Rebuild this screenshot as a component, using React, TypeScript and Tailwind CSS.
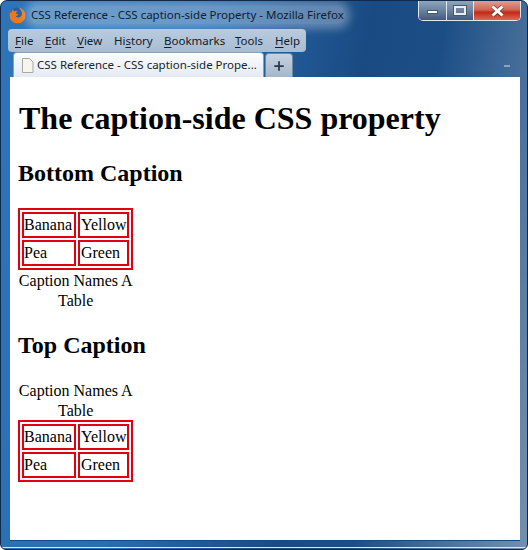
import { Plus } from "lucide-react";

const cell = "border-2 border-[#e00010] py-[2px] text-left font-normal leading-[18px]";

function PlantTable({ side }: { side: "top" | "bottom" }) {
  return (
    <table className="border-separate border-spacing-[2px] border-2 border-[#e00010]" style={{ captionSide: side }}>
      <caption className={side === "bottom" ? "pt-[1px] text-center leading-[19.5px]" : "text-center leading-[19.5px]"}>Caption Names A Table</caption>
      <tbody>
        <tr>
          <td className={`${cell} pl-0 pr-[2px]`}>Banana</td>
          <td className={`${cell} px-[1px]`}>Yellow</td>
        </tr>
        <tr>
          <td className={`${cell} pl-0 pr-[2px]`}>Pea</td>
          <td className={`${cell} px-[1px]`}>Green</td>
        </tr>
      </tbody>
    </table>
  );
}

function MenuItem({ first, rest, pre = "" }: { first: string; rest: string; pre?: string }) {
  return (
    <span>
      {pre}
      <span className="underline underline-offset-2">{first}</span>
      {rest}
    </span>
  );
}

export default function App() {
  return (
    <div className="relative flex h-[550px] w-[528px] flex-col overflow-hidden rounded-t-[7px] rounded-b-[6px] border border-[#10294a] bg-[linear-gradient(100deg,#2e74b8_0%,#2a6db0_32%,#1a4a82_60%,#1c4e86_72%,#7590ae_100%)] font-['Noto_Sans',sans-serif]">
      <div className="flex h-[28px] shrink-0 items-center pl-[8px] text-[11.5px] text-[#10202f]">
        <svg width="17" height="17" viewBox="0 0 17 17" className="mr-[4px] shrink-0">
          <circle cx="8.500" cy="8.500" r="8" fill="#2f5c9c" />
          <path d="M9 .6c4.500.3 7.500 3.700 7.500 7.900a8 8 0 0 1-16 0c0-1.500.3-2.800 1-3.900 0 .8.200 1.300.6 1.600C2.400 4.500 3.200 3 4.300 2.200c-.1 1 .2 1.700.7 2.100 1.500-.9 3-.9 4.500.2-1.500 0-2.700.6-2.600 1.600.1.800 2.100.5 2.200 1.500.1.900-1.200 1.400-2.300 1.300 1 1.900 4.300 2.200 5.800-.4 1.200-2.300-.4-5.900-3.600-7.900z" fill="#e87a1d" />
        </svg>
        <span className="rounded-[8px] bg-[#ffffff4d] px-[1px] shadow-[0_0_8px_5px_#ffffff4d]">CSS Reference - CSS caption-side Property - Mozilla Firefox</span>
      </div>
      <div className="absolute right-[6px] top-0 flex h-[20px] overflow-hidden rounded-b-[5px] border border-t-0 border-[#dfe8f1] text-white">
        <div className="flex w-[28px] items-center justify-center border-r border-[#dfe8f1] bg-[linear-gradient(#8fa5bd,#6a829e_50%,#3e5c7f)]">
          <span className="mt-[2px] h-[4px] w-[11px] border border-[#45586e] bg-white" />
        </div>
        <div className="flex w-[27px] items-center justify-center border-r border-[#dfe8f1] bg-[linear-gradient(#8fa5bd,#6a829e_50%,#3e5c7f)]">
          <span className="h-[9px] w-[12px] border-2 border-[#e8edf2] shadow-[0_0_0_1px_#45586e]" />
        </div>
        <div className="flex w-[46px] items-center justify-center bg-[linear-gradient(#dc9f94,#cb6a58_45%,#c52a18_60%,#d86a50)]">
          <svg width="15" height="12" viewBox="0 0 15 12">
            <path d="M2.500 1.500 12.500 10.500M12.500 1.500 2.500 10.500" stroke="#4a2018" strokeWidth="4.500" strokeOpacity=".5" />
            <path d="M2.500 1.500 12.500 10.500M12.500 1.500 2.500 10.500" stroke="#fff" strokeWidth="3" />
          </svg>
        </div>
      </div>
      <div className="ml-[7px] flex h-[23px] w-[298px] shrink-0 items-center rounded-[4px] bg-[linear-gradient(#b9cbdd,#a9bdd2)] pl-[7px] text-[11.5px] text-[#10202f]">
        <span className="w-[30px]"><MenuItem first="F" rest="ile" /></span>
        <span className="w-[32px]"><MenuItem first="E" rest="dit" /></span>
        <span className="w-[37px]"><MenuItem first="V" rest="iew" /></span>
        <span className="w-[50px]"><MenuItem pre="Hi" first="s" rest="tory" /></span>
        <span className="w-[71px]"><MenuItem first="B" rest="ookmarks" /></span>
        <span className="w-[40px]"><MenuItem first="T" rest="ools" /></span>
        <MenuItem first="H" rest="elp" />
      </div>
      <div className="flex h-[25px] shrink-0 items-end pl-[12px]">
        <div className="flex h-[25px] w-[251px] items-center gap-[3px] whitespace-nowrap rounded-t-[4px] border border-b-0 border-[#8aa0b8] bg-[linear-gradient(#fbfcfe,#e4ebf3)] pl-[7px] text-[11.5px] text-[#1a2430]">
          <svg width="13" height="15" viewBox="0 0 13 15" className="shrink-0">
            <path d="M1.500.5h7l3.500 3.500v10.500h-10.500z" fill="#f6f6ee" stroke="#a8a8a0" />
          </svg>
          <span>CSS Reference - CSS caption-side Prope...</span>
        </div>
        <div className="ml-[1px] flex h-[24px] w-[28px] items-center justify-center rounded-t-[4px] border border-b-0 border-[#6f8aa6] bg-[linear-gradient(#c6d3e0,#a4b7ca)] text-[#2a3848]">
          <Plus size={14} strokeWidth={3} />
        </div>
        <span className="mb-[10px] ml-auto mr-[17px] h-[2px] w-[6px] bg-[#8fa3b8]" />
      </div>
      <div className="ml-[9px] mr-[7px] h-[464px] shrink-0 border-b border-[#1a4a82] bg-white px-[8px] font-['Liberation_Serif',serif] text-[16px] text-black">
        <h1 className="mt-[23px] pl-[1px] text-[32px] font-bold leading-[37px]">The caption-side CSS property</h1>
        <h2 className="mt-[22px] text-[24px] font-bold leading-[28px]">Bottom Caption</h2>
        <div className="mt-[21px]">
          <PlantTable side="bottom" />
        </div>
        <h2 className="mt-[21px] text-[24px] font-bold leading-[28px]">Top Caption</h2>
        <div className="mt-[22px]">
          <PlantTable side="top" />
        </div>
      </div>
      <div className="absolute inset-x-[1px] bottom-[1px] h-[1px] rounded-b-[5px] bg-[#d8e6f2]" />
    </div>
  );
}
